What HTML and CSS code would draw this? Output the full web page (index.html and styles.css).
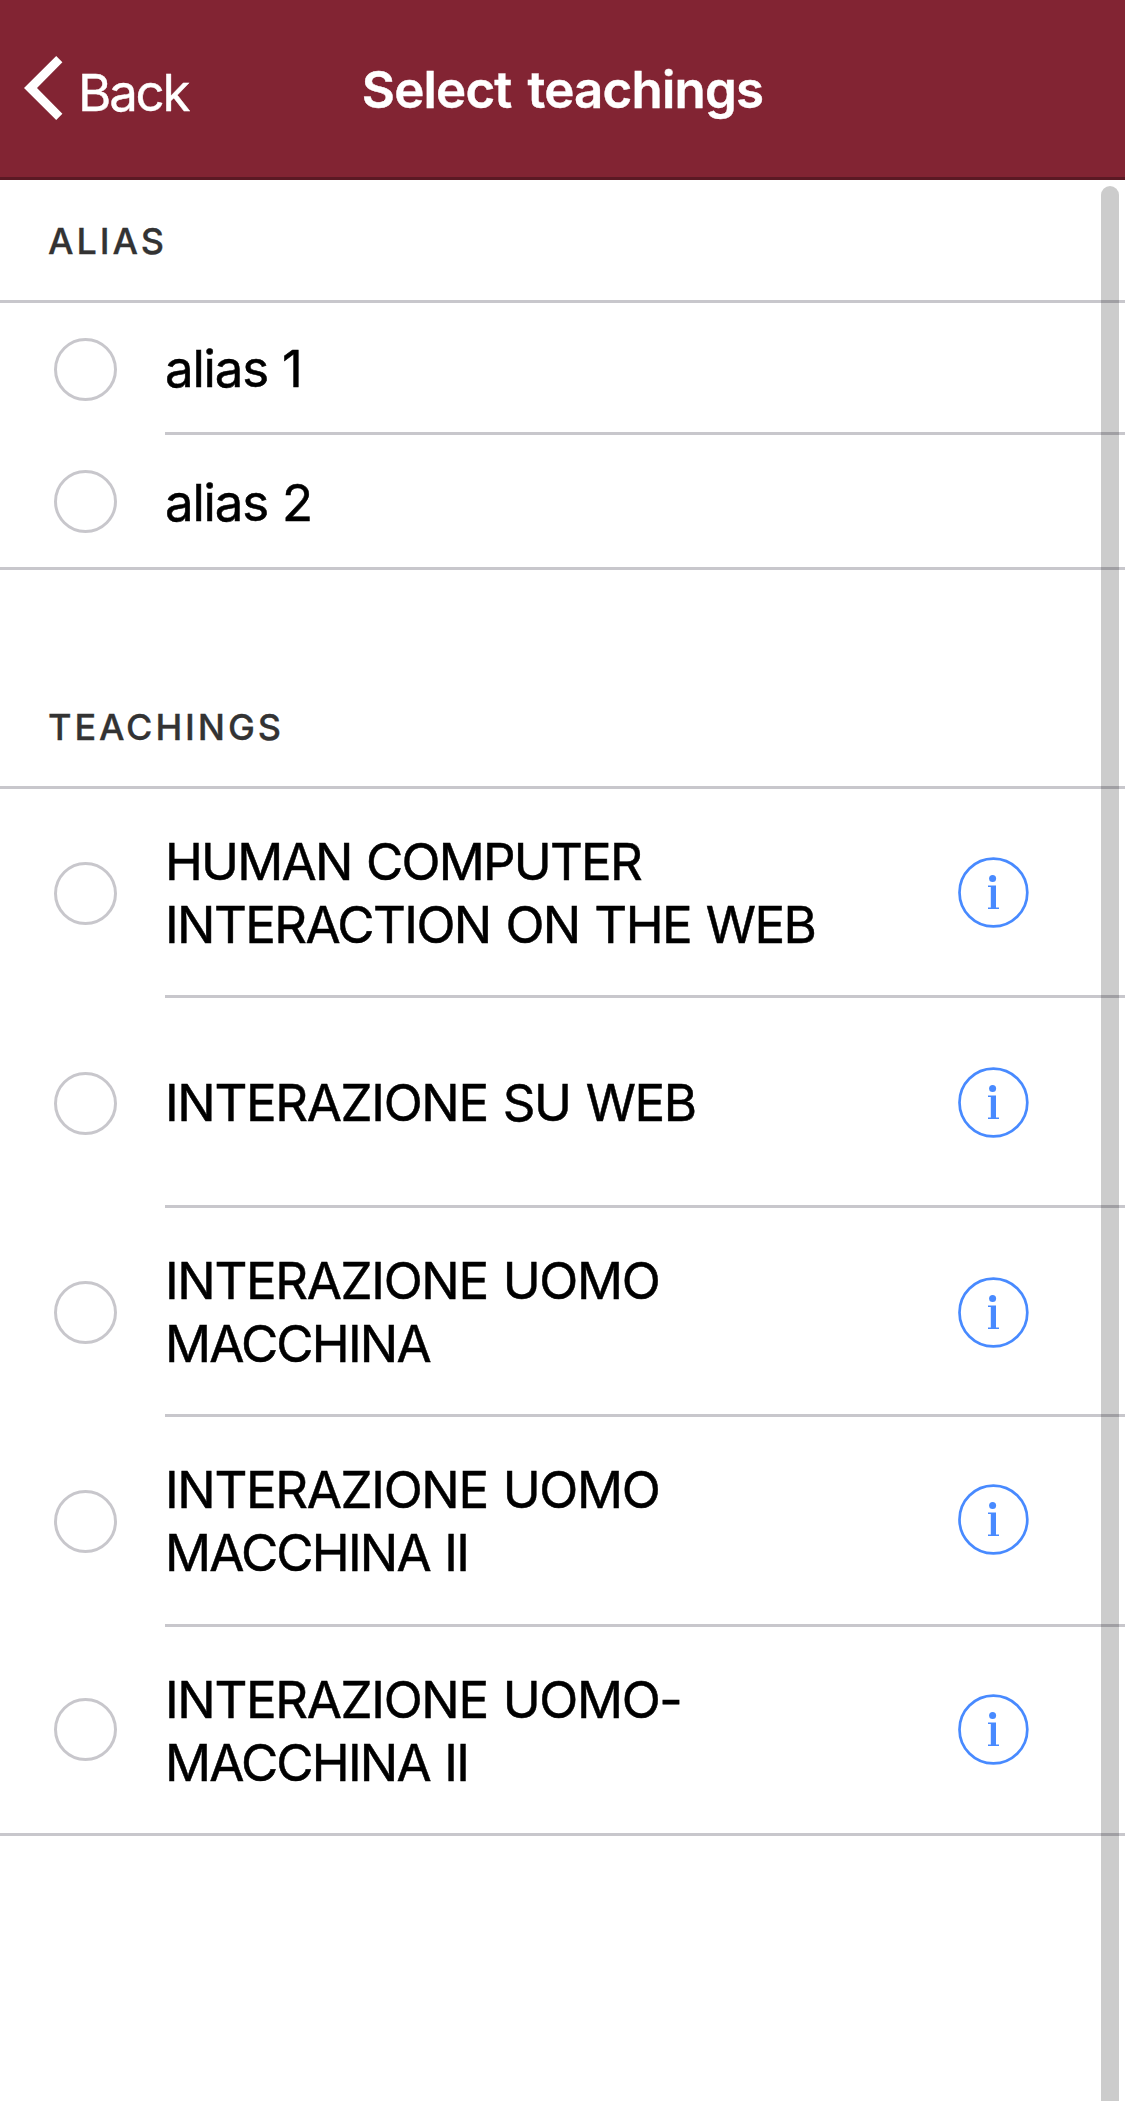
FILE: index.html
```html
<!DOCTYPE html>
<html lang="en">
<head>
<meta charset="utf-8">
<title>Select teachings</title>
<link rel="stylesheet" href="styles.css">
</head>
<body>
<svg class="defs" aria-hidden="true">
  <symbol id="info" viewBox="0 0 71 71">
    <circle cx="35.4" cy="35.5" r="33.9" fill="none" stroke="currentColor" stroke-width="2.7"/>
    <circle cx="34.6" cy="21.4" r="3.5" fill="currentColor"/>
    <path d="M30 28.6h8v22h3V52H30v-1.4h2.8V30H30z" fill="currentColor"/>
  </symbol>
</svg>
<header class="navbar">
  <a class="back">
    <svg class="chevron" viewBox="0 0 39 64" aria-hidden="true"><path d="M32.2 0l6.2 6.2L13 32l25.4 25.8-6.2 6.2L0 32z" fill="#fff"/></svg>
    <span class="back-text">Back</span>
  </a>
  <h1 class="title">Select teachings</h1>
</header>
<main>
  <section>
    <h2 class="label label-alias">ALIAS</h2>
    <ul class="list">
      <li class="item item-alias"><span class="radio"></span><div class="inner"><span class="name name-mixed">alias 1</span></div></li>
      <li class="item item-alias"><span class="radio"></span><div class="inner"><span class="name name-mixed">alias 2</span></div></li>
    </ul>
  </section>
  <section>
    <h2 class="label label-teachings">TEACHINGS</h2>
    <ul class="list">
      <li class="item"><span class="radio"></span><div class="inner"><span class="name"><span class="tight">HUMAN COMPUTER</span><br><span class="medium">INTERACTION ON THE WEB</span></span><svg class="info nudged"><use href="#info"/></svg></div></li>
      <li class="item tall"><span class="radio"></span><div class="inner"><span class="name">INTERAZIONE SU WEB</span><svg class="info"><use href="#info"/></svg></div></li>
      <li class="item"><span class="radio"></span><div class="inner"><span class="name">INTERAZIONE UOMO<br><span class="tight">MACCHINA</span></span><svg class="info"><use href="#info"/></svg></div></li>
      <li class="item tall"><span class="radio nudged"></span><div class="inner"><span class="name nudged">INTERAZIONE UOMO<br><span class="tight">MACCHINA II</span></span><svg class="info raised"><use href="#info"/></svg></div></li>
      <li class="item"><span class="radio nudged"></span><div class="inner"><span class="name">INTERAZIONE UOMO-<br><span class="tight">MACCHINA II</span></span><svg class="info raised"><use href="#info"/></svg></div></li>
    </ul>
  </section>
</main>
<div class="scrollbar"></div>
</body>
</html>
```
FILE: styles.css
```css
* {
  box-sizing: border-box;
}

body {
  margin: 0;
  height: 2101px;
  position: relative;
  overflow: hidden;
  background: #fff;
  color: #000;
  font-family: Inter, "Liberation Sans", sans-serif;
  font-size: 51px;
  line-height: 63px;
}

.defs {
  display: none;
}

.navbar {
  display: grid;
  grid-template-columns: 1fr auto 1fr;
  align-items: start;
  height: 180px;
  padding-top: 55px;
  background: #822433;
  border-bottom: 3px solid #5b1924;
  color: #fff;
}

.back {
  display: flex;
  padding-left: 24px;
}

.chevron {
  width: 39px;
  height: 64px;
  margin-top: 1px;
}

.back-text {
  margin-left: 15px;
  padding-top: 6px;
  letter-spacing: -2.2px;
  -webkit-text-stroke: 0.4px currentColor;
}

.title {
  margin: 3px 0 0;
  font-size: 51px;
  font-weight: 600;
  letter-spacing: -0.8px;
  word-spacing: 4px;
  -webkit-text-stroke: 0.4px currentColor;
}

.label {
  display: flex;
  align-items: flex-end;
  margin: 0;
  padding: 0 48px 37px;
  border-bottom: 3px solid #c8c7cc;
  color: #333;
  font-size: 36px;
  font-weight: 500;
  line-height: 44px;
  letter-spacing: 2.9px;
  -webkit-text-stroke: 0.3px currentColor;
}

.label-alias {
  height: 123px;
}

.label-teachings {
  height: 219px;
}

.list {
  margin: 0;
  padding: 0;
  list-style: none;
  border-bottom: 3px solid #c8c7cc;
}

.item {
  display: flex;
  align-items: center;
  height: 209px;
  padding-left: 54px;
}

.item.tall {
  height: 210px;
}

/* The last row's own border is replaced by the full-width list border. */
.item:last-child {
  height: 206px;
}

.item.item-alias {
  height: 132px;
}

.radio {
  flex: none;
  width: 63px;
  height: 63px;
  margin-right: 48px;
  border: 3px solid #c8c7cc;
  border-radius: 50%;
}

.inner {
  flex: 1;
  align-self: stretch;
  display: flex;
  align-items: center;
  justify-content: space-between;
  padding: 2px 96px 0 0;
  border-bottom: 3px solid #c8c7cc;
}

.item:last-child .inner {
  border-bottom: 0;
}

.name {
  letter-spacing: -1.35px;
  word-spacing: 2px;
  -webkit-text-stroke: 0.5px currentColor;
}

.name-mixed {
  letter-spacing: -1.2px;
  word-spacing: 1px;
}

.tight {
  letter-spacing: -1.8px;
}

.medium {
  letter-spacing: -1.6px;
}

.info {
  flex: none;
  width: 71px;
  height: 71px;
  color: #488aff;
}

.nudged {
  margin-bottom: 2px;
}

.info.raised {
  margin-bottom: 4px;
}

.scrollbar {
  position: absolute;
  top: 186px;
  right: 6px;
  bottom: 0;
  width: 18px;
  border-radius: 9px 9px 0 0;
  background: rgba(0, 0, 0, 0.2);
}
```
